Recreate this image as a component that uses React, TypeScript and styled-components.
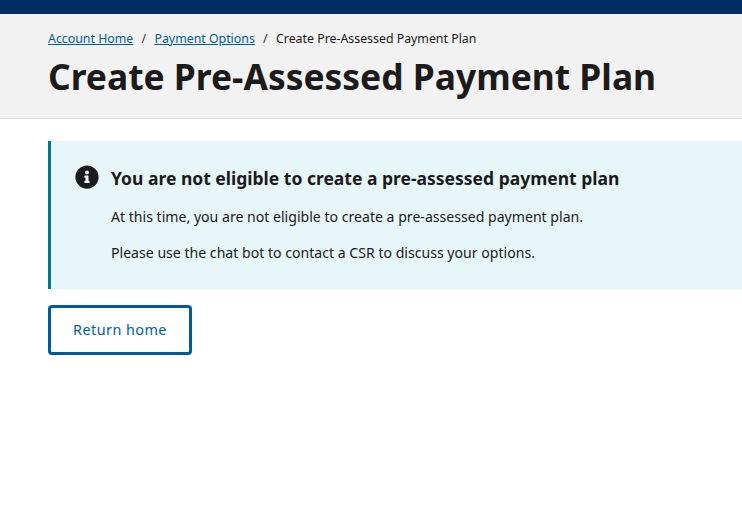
import React from 'react';
import styled, { createGlobalStyle } from 'styled-components';
import { FaInfoCircle } from 'react-icons/fa';

const GlobalStyle = createGlobalStyle`
  html, body {
    margin: 0;
    padding: 0;
    background: #fff;
    font-family: "Noto Sans", "Open Sans", sans-serif;
    color: #1b1b1b;
  }
`;

const TopBar = styled.div`
  height: 14px;
  background: #002d62;
`;

const PageHeader = styled.header`
  box-sizing: border-box;
  height: 105px;
  padding: 16px 48px 0;
  background: #f2f2f2;
  border-bottom: 1px solid #d9d9d9;
`;

const Breadcrumbs = styled.nav`
  display: flex;
  align-items: center;
  height: 18px;
  font-size: 12.35px;
  line-height: 18px;
  white-space: nowrap;
`;

const Crumb = styled.a`
  color: #005ea2;
  text-decoration: underline;
`;

const Separator = styled.span`
  margin: 0 8.3px;
  color: #333;
`;

const Title = styled.h1`
  margin: 6px 0 0;
  font-size: 35.4px;
  line-height: 44px;
  font-weight: 700;
  white-space: nowrap;
`;

const Main = styled.main`
  padding: 22px 0 0 48px;
`;

const Alert = styled.section`
  display: flex;
  gap: 12px;
  height: 148px;
  box-sizing: border-box;
  padding: 24px 0 0 24px;
  background: #e7f6f8;
  border-left: 3px solid #00788a;
`;

const AlertIcon = styled(FaInfoCircle)`
  flex: none;
  width: 24px;
  height: 24px;
  color: #1b1b1b;
`;

const AlertBody = styled.div`
  display: flex;
  flex-direction: column;
`;

const AlertTitle = styled.h2`
  margin: 0 0 15px;
  font-size: 17.5px;
  line-height: 26px;
  font-weight: 700;
  white-space: nowrap;
`;

const AlertText = styled.p`
  margin: 0 0 14px;
  font-size: 14.1px;
  line-height: 22px;
  white-space: nowrap;
`;

const ReturnButton = styled.button`
  display: block;
  margin-top: 16px;
  width: 144px;
  height: 50px;
  padding: 0 0 2px;
  background: #fff;
  border: 3px solid #005a9c;
  border-radius: 4px;
  color: #005ea2;
  font-family: inherit;
  font-size: 14.4px;
  letter-spacing: 0.45px;
`;

const App: React.FC = () => (
  <>
    <GlobalStyle />
    <TopBar />
    <PageHeader>
      <Breadcrumbs>
        <Crumb href="#">Account Home</Crumb>
        <Separator>/</Separator>
        <Crumb href="#">Payment Options</Crumb>
        <Separator>/</Separator>
        <span>Create Pre-Assessed Payment Plan</span>
      </Breadcrumbs>
      <Title>Create Pre-Assessed Payment Plan</Title>
    </PageHeader>
    <Main>
      <Alert>
        <AlertIcon />
        <AlertBody>
          <AlertTitle>You are not eligible to create a pre-assessed payment plan</AlertTitle>
          <AlertText>At this time, you are not eligible to create a pre-assessed payment plan.</AlertText>
          <AlertText>Please use the chat bot to contact a CSR to discuss your options.</AlertText>
        </AlertBody>
      </Alert>
      <ReturnButton>Return home</ReturnButton>
    </Main>
  </>
);

export default App;
